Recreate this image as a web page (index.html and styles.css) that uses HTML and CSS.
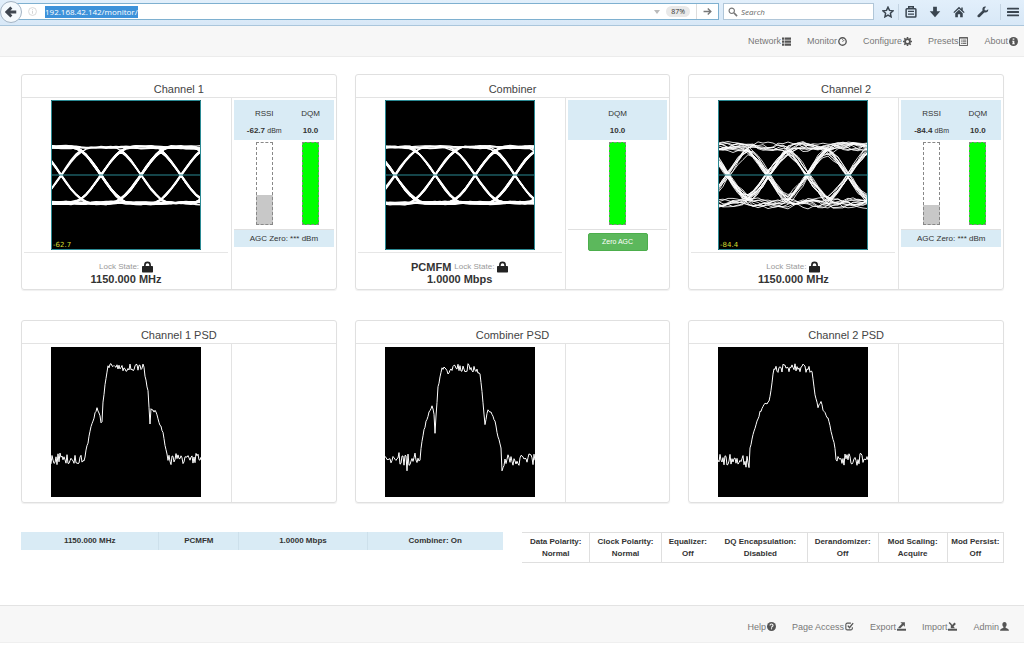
FILE: index.html
```html
<!DOCTYPE html>
<html lang="en">
<head>
<meta charset="utf-8">
<title>Receiver Monitor</title>
<link rel="stylesheet" href="styles.css">
</head>
<body>
<svg class="sprite" aria-hidden="true">
  <symbol id="i-back" viewBox="0 0 16 16"><path d="M8.500 2 2.500 8l6 6M3 8h12" fill="none" stroke="currentColor" stroke-width="3.800"/></symbol>
  <symbol id="i-info-o" viewBox="0 0 16 16"><circle cx="8" cy="8" r="7" fill="none" stroke="currentColor" stroke-width="1.400"/><path d="M7.200 3.800h1.600v1.800H7.200zM7.200 7h1.600v5H7.200z" fill="currentColor"/></symbol>
  <symbol id="i-down" viewBox="0 0 16 16"><path d="M2 4h12l-6 8z" fill="currentColor"/></symbol>
  <symbol id="i-go" viewBox="0 0 16 16"><path d="M1 8h13M8.500 2.500 14 8l-5.500 5.500" fill="none" stroke="currentColor" stroke-width="2.400"/></symbol>
  <symbol id="i-search" viewBox="0 0 16 16"><circle cx="6" cy="6" r="4.300" fill="none" stroke="currentColor" stroke-width="1.800"/><path d="m9.500 9.500 5 5" stroke="currentColor" stroke-width="2.600"/></symbol>
  <symbol id="i-star" viewBox="0 0 16 16"><path d="m8 1.600 2 4.300 4.700.6-3.500 3.200.9 4.700L8 12.100l-4.100 2.300.9-4.700L1.300 6.500 6 5.900z" fill="none" stroke="currentColor" stroke-width="2"/></symbol>
  <symbol id="i-clip" viewBox="0 0 16 16"><path d="M5 3V1h6v2" fill="none" stroke="currentColor" stroke-width="2"/><rect x="1.500" y="3.500" width="13" height="11" rx="1" fill="none" stroke="currentColor" stroke-width="2"/><path d="M4 7.200h8M4 10.800h8" stroke="currentColor" stroke-width="1.800"/></symbol>
  <symbol id="i-download" viewBox="0 0 16 16"><path d="M5.500 1h5v6H15l-7 8-7-8h4.500z" fill="currentColor"/></symbol>
  <symbol id="i-home" viewBox="0 0 16 16"><path d="M8 1 .5 8.200l1.200 1.200L8 3.600l6.300 5.800 1.200-1.200-2.500-2.400V2h-2v1.900z" fill="currentColor"/><path d="M3 9.500 8 5l5 4.500V15H9.500v-4h-3v4H3z" fill="currentColor"/></symbol>
  <symbol id="i-wrench" viewBox="0 0 16 16"><path d="M15 4.200 12.500 6 10.300 5.700 10 3.500 12 1C9.400.2 7 2 7.200 4.800c0 .6.100.9.200 1.200L1.200 12c-1 1-.7 1.900-.1 2.600.8.7 1.800.8 2.600 0L9.700 8.500c3 .9 5.700-1.300 5.300-4.300z" fill="currentColor"/></symbol>
  <symbol id="i-menu" viewBox="0 0 16 16"><path d="M1 3.500h14M1 8h14M1 12.500h14" stroke="currentColor" stroke-width="2.600" stroke-linecap="round"/></symbol>
  <symbol id="i-list" viewBox="0 0 16 16"><path d="M0 1h4v4H0zM5 1h11v4H5zM0 6.200h4v4H0zM5 6.200h11v4H5zM0 11.400h4v4H0zM5 11.400h11v4H5z" fill="currentColor"/></symbol>
  <symbol id="i-gauge" viewBox="0 0 16 16"><circle cx="8" cy="8" r="6.600" fill="none" stroke="currentColor" stroke-width="2.400"/><path d="M8 8.500 11.500 5M8 4v1.500" stroke="currentColor" stroke-width="1.600"/></symbol>
  <symbol id="i-cog" viewBox="0 0 16 16"><circle cx="8" cy="8" r="4.300" fill="none" stroke="currentColor" stroke-width="3.200"/><path d="M8 0v3M8 13v3M0 8h3M13 8h3M2.300 2.300l2.200 2.200M11.500 11.500l2.200 2.200M2.300 13.700l2.200-2.200M11.500 4.500l2.200-2.200" stroke="currentColor" stroke-width="2.800"/></symbol>
  <symbol id="i-preset" viewBox="0 0 16 16"><rect x="1" y="1" width="14" height="14" fill="none" stroke="currentColor" stroke-width="1.600"/><path d="M1 2h14M3.500 5.500h1.500M6 5.500h7M3.500 8.500h1.500M6 8.500h7M3.500 11.500h1.500M6 11.500h7" stroke="currentColor" stroke-width="1.500"/></symbol>
  <symbol id="i-info" viewBox="0 0 16 16"><circle cx="8" cy="8" r="8" fill="currentColor"/><path d="M6.500 2.500h3V5h-3zM5.500 6.500h4v5h1V13h-5v-1.500h1V8h-1z" fill="#f8f8f8"/></symbol>
  <symbol id="i-help" viewBox="0 0 16 16"><circle cx="8" cy="8" r="8" fill="currentColor"/><path d="M5.300 6.200c0-3.400 5.400-3.400 5.400-.2C10.700 8 8 7.800 8 10" fill="none" stroke="#f8f8f8" stroke-width="2"/><path d="M7 11h2v2H7z" fill="#f8f8f8"/></symbol>
  <symbol id="i-edit" viewBox="0 0 16 16"><path d="M10.500 2H4a2.500 2.500 0 0 0-2.500 2.500v7A2.500 2.500 0 0 0 4 14h6.500a2.500 2.500 0 0 0 2.500-2.500V9.500" fill="none" stroke="currentColor" stroke-width="2"/><path d="m5 6.500 3 3.500 6.500-8" fill="none" stroke="currentColor" stroke-width="2.400"/></symbol>
  <symbol id="i-export" viewBox="0 0 16 16"><path d="M0 12h16v3.500H0z" fill="currentColor"/><path d="M6 .5h8v8l-2.700-2.700L6 11H2.500V9.500L8.700 3.200z" fill="currentColor"/></symbol>
  <symbol id="i-import" viewBox="0 0 16 16"><path d="M0 12h16v3.500H0z" fill="currentColor"/><path d="M12.500 11H5V3l2.300 2.300L11.500 1l2.500 2.500-4.200 4.300z" fill="currentColor"/><path d="m2 1 4 4" stroke="currentColor" stroke-width="2.500"/></symbol>
  <symbol id="i-user" viewBox="0 0 16 16"><path d="M8 0C5.500 0 4.200 2 4.200 4.300c0 2 .9 3.500 1.900 4.300v1.600C4 11.300 0 12 0 15.500h16c0-3.500-4-4.200-6.100-5.300V8.600c1-.8 1.900-2.300 1.900-4.300C11.800 2 10.500 0 8 0z" fill="currentColor"/></symbol>
  <symbol id="i-lock" viewBox="0 0 16 16"><path d="M4.200 8V5a3.800 3.800 0 0 1 7.600 0v3" fill="none" stroke="currentColor" stroke-width="2.400"/><rect x="0" y="6.500" width="16" height="9.500" rx="1" fill="currentColor"/></symbol>
</svg>

<header class="browser">
  <button class="back" aria-label="Back"><svg class="ico"><use href="#i-back"/></svg></button>
  <div class="urlbar">
    <svg class="ico ico-site"><use href="#i-info-o"/></svg>
    <input class="url" type="text" aria-label="Address" value="192.168.42.142/monitor/">
    <svg class="ico ico-drop"><use href="#i-down"/></svg>
    <span class="zoom">87%</span>
    <button class="go" aria-label="Go"><svg class="ico"><use href="#i-go"/></svg></button>
  </div>
  <div class="searchbar">
    <svg class="ico"><use href="#i-search"/></svg>
    <input class="search" type="text" aria-label="Search" placeholder="Search">
  </div>
  <div class="tools">
    <button class="tool tool-star" aria-label="Bookmark"><svg class="ico"><use href="#i-star"/></svg></button>
    <button class="tool tool-sep" aria-label="Bookmarks list"><svg class="ico"><use href="#i-clip"/></svg></button>
    <button class="tool" aria-label="Downloads"><svg class="ico"><use href="#i-download"/></svg></button>
    <button class="tool" aria-label="Home"><svg class="ico"><use href="#i-home"/></svg></button>
    <button class="tool" aria-label="Developer"><svg class="ico"><use href="#i-wrench"/></svg></button>
    <button class="tool tool-sep tool-menu" aria-label="Menu"><svg class="ico"><use href="#i-menu"/></svg></button>
  </div>
</header>

<nav class="bar bar-top">
  <a class="link" href="#network">Network<svg class="glyph"><use href="#i-list"/></svg></a>
  <a class="link" href="#monitor">Monitor<svg class="glyph"><use href="#i-gauge"/></svg></a>
  <a class="link" href="#configure">Configure<svg class="glyph"><use href="#i-cog"/></svg></a>
  <a class="link" href="#presets">Presets<svg class="glyph"><use href="#i-preset"/></svg></a>
  <a class="link" href="#about">About<svg class="glyph"><use href="#i-info"/></svg></a>
</nav>

<main class="main">
  <div class="cards">
    <section class="card">
      <h2 class="title">Channel 1</h2>
      <div class="body">
        <div class="left">
          <svg class="scope" viewBox="0 0 150 150" data-eye="1"><text class="level" x="2" y="147">-62.7</text></svg>
          <div class="lock"><div class="state">Lock State: <svg class="padlock"><use href="#i-lock"/></svg></div><strong class="value">1150.000 MHz</strong></div>
        </div>
        <div class="right">
          <div class="readings pair">
            <div class="reading"><span>RSSI</span><span><b>-62.7</b> <small class="unit">dBm</small></span></div>
            <div class="reading"><span>DQM</span><b>10.0</b></div>
          </div>
          <div class="meters pair">
            <div class="slot"><div class="meter"><div class="fill fill-grey" style="height:36%"></div></div></div>
            <div class="slot"><div class="meter"><div class="fill" style="height:100%"></div></div></div>
          </div>
          <div class="agc">AGC Zero: *** dBm</div>
        </div>
      </div>
    </section>
    <section class="card">
      <h2 class="title">Combiner</h2>
      <div class="body">
        <div class="left">
          <svg class="scope" viewBox="0 0 150 150" data-eye="2"></svg>
          <div class="lock"><div class="state"><strong class="value">PCMFM</strong> Lock State: <svg class="padlock"><use href="#i-lock"/></svg></div><strong class="value">1.0000 Mbps</strong></div>
        </div>
        <div class="right">
          <div class="readings"><div class="reading"><span>DQM</span><b>10.0</b></div></div>
          <div class="meters"><div class="slot"><div class="meter"><div class="fill" style="height:100%"></div></div></div></div>
          <div class="action"><button class="zero">Zero AGC</button></div>
        </div>
      </div>
    </section>
    <section class="card">
      <h2 class="title">Channel 2</h2>
      <div class="body">
        <div class="left">
          <svg class="scope" viewBox="0 0 150 150" data-eye="3"><text class="level" x="2" y="147">-84.4</text></svg>
          <div class="lock"><div class="state">Lock State: <svg class="padlock"><use href="#i-lock"/></svg></div><strong class="value">1150.000 MHz</strong></div>
        </div>
        <div class="right">
          <div class="readings pair">
            <div class="reading"><span>RSSI</span><span><b>-84.4</b> <small class="unit">dBm</small></span></div>
            <div class="reading"><span>DQM</span><b>10.0</b></div>
          </div>
          <div class="meters pair">
            <div class="slot"><div class="meter"><div class="fill fill-grey" style="height:24%"></div></div></div>
            <div class="slot"><div class="meter"><div class="fill" style="height:100%"></div></div></div>
          </div>
          <div class="agc">AGC Zero: *** dBm</div>
        </div>
      </div>
    </section>

    <section class="card">
      <h2 class="title">Channel 1 PSD</h2>
      <div class="body"><div class="left left-psd"><svg class="scope" viewBox="0 0 150 150" data-psd="0"></svg></div><div class="right"></div></div>
    </section>
    <section class="card">
      <h2 class="title">Combiner PSD</h2>
      <div class="body"><div class="left left-psd"><svg class="scope" viewBox="0 0 150 150" data-psd="1"></svg></div><div class="right"></div></div>
    </section>
    <section class="card">
      <h2 class="title">Channel 2 PSD</h2>
      <div class="body"><div class="left left-psd"><svg class="scope" viewBox="0 0 150 150" data-psd="2"></svg></div><div class="right"></div></div>
    </section>
  </div>

  <div class="status">
    <table class="summary">
      <colgroup><col class="c-freq"><col class="c-mode"><col class="c-rate"><col class="c-comb"></colgroup>
      <tr><td>1150.000 MHz</td><td>PCMFM</td><td>1.0000 Mbps</td><td>Combiner: On</td></tr>
    </table>
    <table class="settings">
      <colgroup><col class="c-data"><col class="c-clock"><col class="c-eq"><col class="c-dq"><col class="c-derand"><col class="c-scale"><col class="c-persist"></colgroup>
      <tr>
        <td>Data Polarity:<br>Normal</td><td>Clock Polarity:<br>Normal</td><td class="open">Equalizer:<br>Off</td><td>DQ Encapsulation:<br>Disabled</td><td>Derandomizer:<br>Off</td><td>Mod Scaling:<br>Acquire</td><td>Mod Persist:<br>Off</td>
      </tr>
    </table>
  </div>
</main>

<footer class="bar bar-bottom">
  <a class="link" href="#help">Help<svg class="glyph"><use href="#i-help"/></svg></a>
  <a class="link" href="#access">Page Access<svg class="glyph"><use href="#i-edit"/></svg></a>
  <a class="link" href="#export">Export<svg class="glyph"><use href="#i-export"/></svg></a>
  <a class="link" href="#import">Import<svg class="glyph"><use href="#i-import"/></svg></a>
  <a class="link" href="#admin">Admin<svg class="glyph"><use href="#i-user"/></svg></a>
</footer>
<script src="scopes.js"></script>
</body>
</html>
```

FILE: styles.css
```css
* { box-sizing: border-box; }
body { margin: 0; background: #fff; color: #333; font: 8px/12px "Liberation Sans", Arial, sans-serif; }
button, input { font: inherit; color: inherit; padding: 0; margin: 0; border: 0; background: none; }
svg { display: block; }
.sprite { position: absolute; width: 0; height: 0; }
.ico { width: 12px; height: 12px; flex: none; }

/* browser toolbar */
.browser { display: flex; align-items: center; height: 26px; padding-bottom: 2px; background: linear-gradient(#e2effb, #d8e8f7); border-bottom: 1px solid #aac6dc; font-family: "Open Sans", "Noto Sans", sans-serif; }
.back { position: relative; z-index: 1; flex: none; display: grid; place-items: center; width: 22px; height: 22px; margin-right: -8px; border: 1px solid #a4b4c4; border-radius: 50%; background: #f4f9fd; color: #3f4650; }
.urlbar { flex: 1; display: flex; align-items: center; height: 17px; padding-left: 13px; background: #fff; border: 1px solid #7eb0d0; }
.ico-site { width: 9px; height: 9px; color: #d0d0d0; margin-right: 8px; }
.url { field-sizing: content; margin-right: auto; background: #3d92da; color: #fff; line-height: 12px; height: 12px; }
.ico-drop { width: 8px; height: 8px; color: #bbb; margin-right: 5px; }
.zoom { padding: 0 5px; border-radius: 6px; background: #e9e9e9; color: #333; line-height: 11px; font-size: 7px; }
.go { display: grid; place-items: center; width: 22px; height: 15px; margin-left: 6px; border-left: 1px solid #ddd; color: #777; }
.go .ico { width: 9px; height: 9px; }
.searchbar { flex: none; display: flex; align-items: center; gap: 3px; width: 151px; height: 17px; margin-left: 4px; padding-left: 4px; background: #fff; border: 1px solid #b0c6d8; color: #777; }
.searchbar .ico { width: 10px; height: 10px; }
.search { flex: 1; min-width: 0; line-height: 12px; }
.search::placeholder { color: #666; font-style: italic; opacity: 1; }
.tools { flex: none; display: flex; width: 148px; margin-left: 2px; color: #3a4550; }
.tool { flex: none; width: 24px; display: grid; place-items: center; height: 16px; border-left: 1px solid transparent; }
.tool-star { width: 22px; }
.tool-menu { margin-left: auto; }
.tool-sep { border-left-color: #c3d3e2; }

/* page bars */
.bar { display: flex; justify-content: flex-end; align-items: center; gap: 16px; background: #f7f7f7; color: #777; font-size: 9px; }
.bar-top { height: 31px; padding-right: 6px; border-bottom: 1px solid #ececec; }
.bar-bottom { height: 38px; padding: 5px 15px 0 0; border-top: 1px solid #e3e3e3; border-bottom: 1px solid #efefef; }
.link { display: flex; align-items: center; gap: 1px; color: inherit; text-decoration: none; }
.glyph { width: 9px; height: 9px; color: #555; }

/* cards */
.main { padding: 17px 20px 42px 21px; }
.cards { display: grid; grid-template-columns: repeat(3, minmax(0, 1fr)); gap: 30px 18px; }
.card { display: flex; flex-direction: column; border: 1px solid #e0e0e0; border-radius: 3px; box-shadow: 0 1px 1px #f0f0f0; }
.title { margin: 0; padding-top: 6px; height: 23px; border-bottom: 1px solid #e3e3e3; color: #444; text-align: center; font-size: 11px; line-height: 16px; font-weight: normal; }
.body { flex: 1; display: grid; grid-template-columns: 2fr 1fr; }
.left { padding: 2px 3px 4px 2px; }
.left-psd { padding: 3px 3px 5px 2px; }
.right { border-left: 1px solid #e3e3e3; padding: 2px; }
.scope { width: 150px; height: 150px; margin: 0 auto; background: #000; }
.level { fill: #d6dc30; font: 7px "DejaVu Sans", sans-serif; }
.trace { fill: none; stroke: #fff; stroke-width: 1; }
.thick { stroke-width: 1.300; }
.fine { opacity: .85; }
.axis { fill: none; stroke: #2b8a94; stroke-width: 1; }
.lock { margin-top: 2px; padding-top: 8px; border-top: 1px solid #e6e6e6; text-align: center; }
.state { display: flex; justify-content: center; align-items: flex-end; gap: 3px; height: 12px; color: #999; }
.value { display: block; color: #333; font-size: 11px; line-height: 12px; }
.padlock { width: 11px; height: 12px; color: #222; }

/* side readings */
.readings { display: flex; height: 40px; padding-top: 8px; background: #d9ebf5; }
.pair { padding-left: 7px; }
.reading { flex: 1; display: flex; flex-direction: column; gap: 5px; align-items: center; white-space: nowrap; }
.unit { font-size: 7px; }
.meters { display: flex; padding-top: 2px; padding-bottom: 4px; border-bottom: 1px solid #e0e0e0; }
.slot { flex: 1; display: flex; justify-content: center; }
.meter { display: flex; align-items: flex-end; width: 17px; height: 83px; background: #fff; position: relative; }
.meter::after { content: ""; position: absolute; inset: 0; border: 1px dashed #888; }
.fill { width: 100%; background: #0f0; }
.fill-grey { background: #c8c8c8; }
.agc { height: 17px; background: #d9ebf5; line-height: 18px; text-align: center; }
.action { display: flex; justify-content: center; padding-top: 3px; }
.zero { width: 60px; height: 18px; border: 1px solid #4cae4c; border-radius: 2px; background: #5cb85c; color: #fff; font-size: 7px; }

/* status tables */
.status { display: grid; grid-template-columns: 1fr 1fr; gap: 19px; align-items: start; margin-top: 29px; }
.status table { width: 100%; table-layout: fixed; border-collapse: collapse; font-weight: bold; text-align: center; }
.status td { padding: 3px 0 2px; border: 1px solid #dfdfdf; white-space: nowrap; }
.status td:first-child { border-left: 0; }
.status .open { border-right: 0; }
.status .open + td { border-left: 0; }
.status .summary td { border: 0; border-right: 1px solid #cde0eb; padding: 3px 0; background: #d9ebf5; }
.status .summary td:last-child { border-right: 0; }
.c-freq { width: 28.6%; }
.c-mode { width: 16.6%; }
.c-rate { width: 26.6%; }
.c-comb { width: 28.2%; }
.c-data { width: 14.1%; }
.c-clock { width: 14.8%; }
.c-eq { width: 11%; }
.c-dq { width: 19.3%; }
.c-derand { width: 14.8%; }
.c-scale { width: 14.3%; }
.c-persist { width: 11.7%; }
```

FILE: scopes.js
```js
const NS = "http://www.w3.org/2000/svg";

// Small seeded generator so that every load draws the same traces.
function generator(seed) {
  let a = seed * 2654435761;
  return () => {
    a = (a + 0x6d2b79f5) | 0;
    let t = Math.imul(a ^ (a >>> 15), 1 | a);
    t = (t + Math.imul(t ^ (t >>> 7), 61 | t)) ^ t;
    return ((t ^ (t >>> 14)) >>> 0) / 4294967296;
  };
}

function add(svg, cls, d) {
  const p = document.createElementNS(NS, "path");
  p.setAttribute("class", cls);
  p.setAttribute("d", d);
  svg.prepend(p);
}

const toPath = (pts) => "M" + pts.map(([x, y]) => x.toFixed(1) + " " + y.toFixed(1)).join("L");

// Eye diagram: random bits, symbol period 40, crossings at 10 + 40k.
function drawEye(svg, id) {
  const rnd = generator(id);
  const noisy = id === 3;
  const noise = noisy ? 3 : 0.9;
  const jitter = noisy ? 2.4 : 0.7;
  add(svg, "axis", "M.5 .5H149.500V149.500H.5ZM0 75H150");
  for (let n = 0; n < (noisy ? 44 : 36); n++) {
    const bits = Array.from({ length: 7 }, () => (rnd() < 0.5 ? -1 : 1));
    const edges = [];
    for (let k = 1; k < 7; k++) {
      if (bits[k] !== bits[k - 1]) edges.push(10 + 40 * (k - 2) + (rnd() - 0.5) * 2 * jitter);
    }
    const amp = 28 + (rnd() - 0.5) * noise * 1.4;
    const phase = rnd() * 6.28, rate = 0.06 + rnd() * 0.1;
    const pts = [];
    for (let x = 0; x <= 150; x += 5) {
      const near = edges.reduce((m, e) => Math.min(m, Math.abs(x - e)), 99);
      const passed = edges.filter((e) => e <= x).length;
      const sign = bits[0] * (passed % 2 ? -1 : 1);
      const shape = Math.sin((Math.PI / 2) * Math.min(near / 30, 1));
      const ripple = noise * Math.sin(x * rate + phase) * shape + (rnd() - 0.5) * noise * 0.9;
      pts.push([x, 75 - sign * amp * shape + ripple]);
    }
    add(svg, noisy ? "trace fine" : "trace thick", toPath(pts));
  }
}

// Spectrum envelopes; noise is added on the floor and on the plateau.
const spectra = [
  [[0,112],[33,112],[37,95],[40,80],[45,64],[46,61],[48,65],[50,75],[51,75],[52,55],[54,38],[56,25],[57,21],[92,21],[94,28],[97,45],[99,77],[100,63],[105,65],[108,75],[112,86],[115,103],[117,111],[119,115],[123,112],[150,112]],
  [[0,113],[12,110],[21,114],[22,126],[23,113],[34,109],[35,108],[37,93],[41,75],[43,68],[47,59],[49,66],[50,85],[51,68],[53,41],[56,25],[63,23],[69,18],[75,21],[90,21],[95,28],[97,45],[100,77],[103,63],[106,65],[110,75],[113,91],[115,96],[117,118],[119,113],[150,112]],
  [[0,112],[31,115],[32,100],[36,85],[42,65],[47,57],[51,55],[53,43],[55,26],[59,21],[93,21],[95,31],[97,48],[100,61],[103,55],[105,63],[110,71],[113,83],[116,96],[118,108],[120,113],[150,112]]
];

function drawSpectrum(svg, id) {
  const rnd = generator(id + 11);
  const env = spectra[id];
  const pts = [];
  for (let x = 0; x <= 150; x++) {
    const i = Math.max(1, env.findIndex((p) => p[0] >= x));
    const [x0, y0] = env[i - 1], [x1, y1] = env[i];
    const y = y0 + ((y1 - y0) * (x - x0)) / (x1 - x0);
    const spread = y > 104 ? 12 : y < 25 ? 9 : 3;
    pts.push([x, y + (rnd() - 0.5) * spread]);
  }
  add(svg, "trace", toPath(pts));
}

document.querySelectorAll("[data-eye]").forEach((el) => drawEye(el, Number(el.dataset.eye)));
document.querySelectorAll("[data-psd]").forEach((el) => drawSpectrum(el, Number(el.dataset.psd)));
```
